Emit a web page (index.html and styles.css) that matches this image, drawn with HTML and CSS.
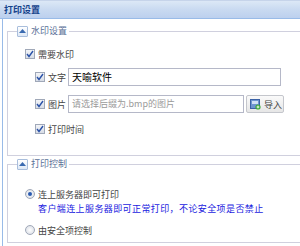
FILE: index.html
```html
<!DOCTYPE html>
<html>
<head>
<meta charset="utf-8">
<link rel="stylesheet" href="styles.css">
</head>
<body>
<div class="panel">
  <div class="header">打印设置</div>
  <div class="body">
    <fieldset class="fs fs1">
      <legend><span class="tool"><svg width="7" height="4" viewBox="0 0 7 4"><path d="M0 4 L3.5 0 L7 4 Z" fill="#3a6ab0"/></svg></span><span class="ltext">水印设置</span></legend>
      <div class="row r-need"><span class="cb"><svg width="8" height="8" viewBox="0 0 8 8"><path d="M1 4 L3 6.5 L7 1" stroke="#2a52a8" stroke-width="1.4" fill="none"/></svg></span><span class="txt">需要水印</span></div>
      <div class="sub">
        <div class="row r-text"><span class="cb"><svg width="8" height="8" viewBox="0 0 8 8"><path d="M1 4 L3 6.5 L7 1" stroke="#2a52a8" stroke-width="1.4" fill="none"/></svg></span><span class="lbl">文字</span><div class="input val">天喻软件</div></div>
        <div class="row r-pic"><span class="cb"><svg width="8" height="8" viewBox="0 0 8 8"><path d="M1 4 L3 6.5 L7 1" stroke="#2a52a8" stroke-width="1.4" fill="none"/></svg></span><span class="lbl">图片</span><div class="input ph short">请选择后缀为.bmp的图片</div><div class="btn"><svg width="11" height="11" viewBox="0 0 11 11"><rect x="0.5" y="0.5" width="9" height="9" fill="#6d95d0" stroke="#3b62a6"/><rect x="2" y="2" width="6" height="3" fill="#cfe0f6"/><circle cx="8" cy="8" r="2.6" fill="#3aa83a"/><path d="M8 6.6 V9.4 M6.6 8 H9.4" stroke="#fff" stroke-width="0.9"/></svg><span>导入</span></div></div>
        <div class="row r-time"><span class="cb"><svg width="8" height="8" viewBox="0 0 8 8"><path d="M1 4 L3 6.5 L7 1" stroke="#2a52a8" stroke-width="1.4" fill="none"/></svg></span><span class="txt">打印时间</span></div>
      </div>
    </fieldset>
    <fieldset class="fs fs2">
      <legend><span class="tool"><svg width="7" height="4" viewBox="0 0 7 4"><path d="M0 4 L3.5 0 L7 4 Z" fill="#3a6ab0"/></svg></span><span class="ltext">打印控制</span></legend>
      <div class="row r-radio1"><span class="rd on"></span><span class="txt">连上服务器即可打印</span></div>
      <div class="note">客户端连上服务器即可正常打印，不论安全项是否禁止</div>
      <div class="row r-radio2"><span class="rd"></span><span class="txt">由安全项控制</span></div>
    </fieldset>
  </div>
</div>
</body>
</html>
```
FILE: styles.css
```css
html, body {
  margin: 0;
  padding: 0;
  background: #fff;
  overflow: hidden;
  width: 300px;
  height: 246px;
}
body {
  font-family: "Noto Sans CJK SC", "Liberation Sans", sans-serif;
  font-size: 9px;
  color: #444;
}
.panel {
  width: 300px;
  height: 246px;
  overflow: hidden;
}
.header {
  height: 17px;
  line-height: 17px;
  border-top: 1px solid #c6d4ea;
  border-bottom: 1px solid #99bbe8;
  background: linear-gradient(#dce8f6, #c9daf1 50%, #bcd0ee);
  color: #15428b;
  font-weight: bold;
  padding-left: 4px;
  font-size: 9px;
}
.body {
  margin-left: 2px;
  border-left: 1px solid #99bbe8;
  height: 227px;
  padding: 6px 0 0 4px;
  overflow: hidden;
}
.fs {
  margin: 0;
  border: 1px solid #d0d0de;
  width: 320px;
  padding: 0 0 0 17px;
  box-sizing: border-box;
}
.fs legend {
  margin-left: -8px;
  padding: 0 2px 0 0;
  height: 12px;
  line-height: 12px;
  display: flex;
  align-items: center;
  color: #5a6f96;
}
.tool {
  width: 9px;
  height: 9px;
  border: 1px solid #a9bedc;
  background: linear-gradient(#ffffff, #dde8f6);
  display: flex;
  align-items: center;
  justify-content: center;
  margin-right: 3px;
  border-radius: 1px;
}
.row {
  display: flex;
  align-items: center;
}
.cb {
  width: 8px;
  height: 8px;
  border: 1px solid #a0a8b8;
  background: linear-gradient(#f2f4f8, #d8dde6);
  display: flex;
  align-items: center;
  justify-content: center;
  margin-right: 3px;
  flex: none;
}
.txt { color: #444; }
.lbl { width: 20px; color: #444; }
.fs1 { height: 131px; }
.r-need { margin-top: 11px; height: 12px; }
.sub { padding-left: 10px; }
.r-text { margin-top: 8px; height: 18px; }
.r-pic { margin-top: 9px; height: 18px; }
.r-time { margin-top: 10px; height: 12px; }
.input {
  height: 16px;
  line-height: 16px;
  border: 1px solid #b5b8c8;
  background: #fff;
  padding-left: 3px;
  box-sizing: content-box;
}
.input.val { width: 208px; color: #000; font-size: 10px; }
.input.short { width: 171px; }
.input.ph { color: #9a9a9a; }
.btn {
  margin-left: 2px;
  width: 33px;
  height: 16px;
  border: 1px solid #c4c6cc;
  border-radius: 2px;
  background: linear-gradient(#fafafa, #e6e6e6);
  display: flex;
  align-items: center;
  padding-left: 3px;
  box-sizing: content-box;
  gap: 3px;
  color: #444;
}
.fs2 { margin-top: 2px; height: 85px; }
.r-radio1 { margin-top: 18px; height: 12px; }
.note { margin: 3px 0 0 13px; height: 12px; line-height: 12px; color: #1a1ae0; letter-spacing: 0.4px; }
.r-radio2 { margin-top: 9px; height: 12px; }
.rd {
  width: 8px;
  height: 8px;
  border-radius: 50%;
  border: 1px solid #a0a8b8;
  background: radial-gradient(#ffffff, #d4d9e2);
  margin-right: 3px;
  display: flex;
  align-items: center;
  justify-content: center;
  flex: none;
}
.rd.on::after {
  content: "";
  width: 4px;
  height: 4px;
  border-radius: 50%;
  background: #2a5ab0;
}
```
